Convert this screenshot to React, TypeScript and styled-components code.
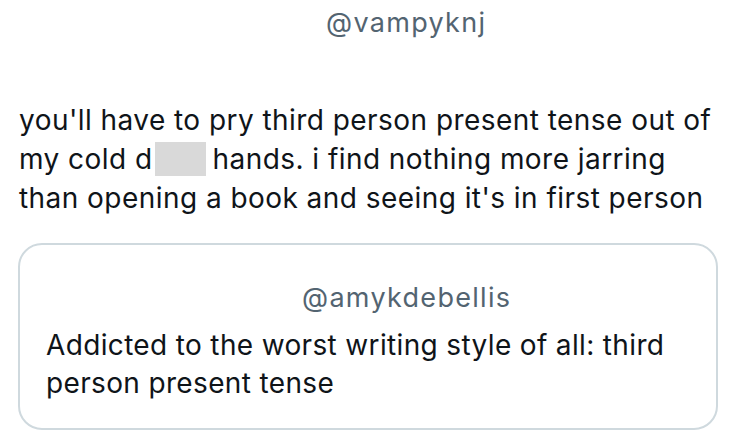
import React from "react";
import styled, { createGlobalStyle } from "styled-components";

const Global = createGlobalStyle`
  html, body { margin: 0; padding: 0; background: #ffffff; }
  body { font-family: Inter, "Liberation Sans", sans-serif; -webkit-font-smoothing: antialiased; }
`;

const Page = styled.div`
  width: 734px;
  height: 446px;
  overflow: hidden;
  display: flex;
  flex-direction: column;
  padding: 7px 0 0 18px;
  box-sizing: border-box;
`;

const Handle = styled.div<{ $indent: number }>`
  padding-left: ${(p) => p.$indent}px;
  font-size: 27px;
  line-height: 32px;
  color: #536471;
  letter-spacing: 1.3px;
`;

const Body = styled.p`
  margin: 62px 0 0 1px;
  width: 694px;
  font-size: 28px;
  line-height: 39px;
  color: #0f1419;
  letter-spacing: 0.45px;
`;

const Redact = styled.span`
  display: inline-block;
  width: 51px;
  height: 34px;
  background: #d9d9d9;
  vertical-align: -7px;
  margin: 0 7px 0 2px;
`;

const Quote = styled.div`
  margin-top: 25px;
  width: 700px;
  height: 187px;
  box-sizing: border-box;
  border: 2px solid #cfd9de;
  border-radius: 24px;
  padding: 37px 0 0 26px;
  display: flex;
  flex-direction: column;
`;

const QuoteText = styled.p`
  margin: 12px 0 0 0;
  font-size: 28px;
  line-height: 38px;
  color: #0f1419;
  letter-spacing: 0.35px;
`;

export default function App() {
  return (
    <>
      <Global />
      <Page>
        <Handle $indent={308}>@vampyknj</Handle>
        <Body>
          you'll have to pry third person present tense out of my cold d
          <Redact />
          hands. i find nothing more jarring than opening a book and seeing
          it's in first person
        </Body>
        <Quote>
          <Handle $indent={256}>@amykdebellis</Handle>
          <QuoteText>
            Addicted to the worst writing style of all: third person present
            tense
          </QuoteText>
        </Quote>
      </Page>
    </>
  );
}
